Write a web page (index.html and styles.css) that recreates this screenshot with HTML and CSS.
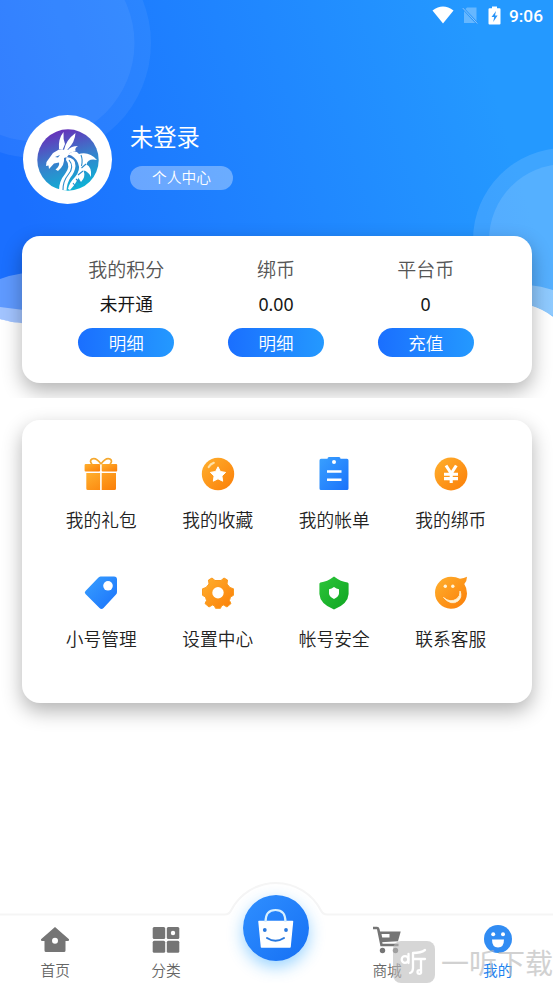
FILE: index.html
```html
<!DOCTYPE html>
<html lang="zh-CN">
<head>
<meta charset="utf-8">
<title>我的</title>
<link rel="stylesheet" href="styles.css">
</head>
<body>
<svg class="defs" width="0" height="0" aria-hidden="true">
  <defs>
    <linearGradient id="orange" x1="0" y1="0" x2="1" y2="1"><stop offset="0" stop-color="#ffb02e"/><stop offset="1" stop-color="#fb7e08"/></linearGradient>
    <linearGradient id="blue" x1="0" y1="0" x2="1" y2="1"><stop offset="0" stop-color="#39a0ff"/><stop offset="1" stop-color="#1a72fb"/></linearGradient>
    <linearGradient id="green" x1="0" y1="0" x2="1" y2="1"><stop offset="0" stop-color="#2cc53a"/><stop offset="1" stop-color="#10a522"/></linearGradient>
  </defs>
</svg>
<div class="screen">
  <header class="hero">
    <svg class="hero-bg" viewBox="0 0 553 398" aria-hidden="true">
      <defs>
        <linearGradient id="sky" gradientUnits="userSpaceOnUse" x1="30" y1="250" x2="500" y2="110"><stop offset="0" stop-color="#1a6fff"/><stop offset="1" stop-color="#2499ff"/></linearGradient>
      </defs>
      <rect width="553" height="398" fill="#fff"/>
      <path d="M0 0H553V317Q542 309 531 306L276 350L21 323Q10 322 0 319Z" fill="url(#sky)"/>
      <circle cx="36" cy="43" r="115" fill="#fff" opacity=".06"/>
      <circle cx="36" cy="43" r="98.500" fill="#fff" opacity=".06"/>
      <circle cx="565" cy="240" r="92" fill="#fff" opacity=".12"/>
      <circle cx="565" cy="240" r="76" fill="#fff" opacity=".12"/>
      <path d="M0 279Q11 275 24 273V324Q10 322 0 319Z" fill="#fff" opacity=".3"/>
      <path d="M0 307L24 310V324Q10 322 0 319Z" fill="#fff" opacity=".42"/>
      <path d="M529 285Q541 286 553 290V317Q542 309 529 306Z" fill="#fff" opacity=".34"/>
      <path d="M529 305Q543 309 553 317V340H529Z" fill="#fff"/>
    </svg>
    <div class="status">
      <svg class="wifi" viewBox="0 0 22 18"><path d="M.5 4.500Q11-3.500 21.500 4.500L11 17.500Z" fill="#fff"/></svg>
      <svg class="sim" viewBox="0 0 16 18"><path d="M5 1.500H14.500V17H2V4.500Z" fill="#fff" opacity=".3"/><path d="M.7 2L15.300 17.500" stroke="#2795fb" stroke-width="2.400"/><path d="M.7 2L15.300 17.500" stroke="#fff" opacity=".45"/></svg>
      <svg class="battery" viewBox="0 0 13 19"><path d="M4 .5H9V2.200H11.500Q12.500 2.200 12.500 3.200V17.500Q12.500 18.500 11.500 18.500H1.500Q.5 18.500 .5 17.500V3.200Q.5 2.200 1.500 2.200H4Z" fill="#fff"/><path d="M8 5L3.500 11H6.200L5.200 16L9.600 9.500H7Z" fill="#2994f7"/></svg>
      <span class="time">9:06</span>
    </div>
    <div class="profile">
      <div class="avatar">
        <svg viewBox="0 0 62 62">
          <defs><linearGradient id="dusk" x1=".3" y1="0" x2=".6" y2="1"><stop offset="0" stop-color="#6a2cb8"/><stop offset=".5" stop-color="#377fcc"/><stop offset="1" stop-color="#0cb4d5"/></linearGradient></defs>
          <circle cx="31" cy="31" r="30.700" fill="url(#dusk)"/>
          <g fill="#fff">
            <path d="M22 20Q21 10 26.500 3Q26 10 28 15L25.500 21Z"/>
            <path d="M27 21Q29 11 38.500 4Q38 13 31 20L29 23Z"/>
            <path d="M16 24L22 20.500L31 21Q34 17 41 17Q37.500 19 38.500 22L33 24L30 28L27 29Q28 36 21 42L18.500 40.500Q23 37 22 33.500L17 34.500L12 40L11.500 36.500L9 37L9.500 33Z"/>
            <path d="M31 25.500Q38 20 42 25L44 24.500Q53 23 60 31Q51 29 49.500 35.500Q55 38 54 48Q51 42 46.500 41.500Q49 48 44 53L41.500 49Q38 56 33 61L31 60Q32 54 38 48Q44 41 41 34Q38 27 31 25.500Z"/>
            <path d="M29.500 28Q39 29 38.500 37Q38 43 33.500 48.500Q30 54 29.500 61.500H22Q22 52 28 45Q34 37 29 31Z"/>
          </g>
          <path d="M32 31Q38 38 31 46Q26 52 26 61M44 26Q46 31 44.500 37M49 35L44.500 39M46 42L41 46M39 50L43 54M36 54L39 58" fill="none" stroke="#2b8dcc" stroke-width="1.100"/>
          <path d="M18 28L23 26L21 28.500Z" fill="#3277c7"/>
        </svg>
      </div>
      <div class="who">
        <h1>未登录</h1>
        <a class="center">个人中心</a>
      </div>
    </div>
    <section class="card wallet">
      <div class="purse"><span class="label">我的积分</span><span class="value">未开通</span><button>明细</button></div>
      <div class="purse"><span class="label">绑币</span><span class="value">0.00</span><button>明细</button></div>
      <div class="purse"><span class="label">平台币</span><span class="value">0</span><button>充值</button></div>
    </section>
  </header>

  <main class="card menu">
    <a class="item"><svg viewBox="0 0 36 36"><g fill="url(#orange)"><rect x="1.600" y="8" width="15.500" height="7.500" rx="1"/><rect x="18.700" y="8" width="15.500" height="7.500" rx="1"/><path d="M3.300 17H17.100V34H4.800Q3.300 34 3.300 32.500ZM18.700 17H33V32.500Q33 34 31.500 34H18.700Z"/></g><path d="M18 8Q13 1 9 3Q6 5 9 8M18 8Q23 1 27 3Q30 5 27 8" fill="none" stroke="#f5a82e" stroke-width="1.700"/></svg><span>我的礼包</span></a>
    <a class="item"><svg viewBox="0 0 36 36"><circle cx="18" cy="18" r="16.200" fill="url(#orange)"/><path d="M18 10.800L20.400 15.500L25.600 16.400L21.900 20L22.700 25.200L18 22.800L13.300 25.200L14.100 20L10.400 16.400L15.600 15.500Z" fill="#fff" stroke="#fff" stroke-linejoin="round"/><path d="M8.700 11Q10.500 8 13.800 6.800" fill="none" stroke="#ffe1a5" stroke-width="2.200" stroke-linecap="round"/></svg><span>我的收藏</span></a>
    <a class="item"><svg viewBox="0 0 36 36"><path d="M5 2.800H11.500Q11.500 1 13 1H23Q24.500 1 24.500 2.800H31Q32.500 2.800 32.500 4.500V32.500Q32.500 34 31 34H5Q3.500 34 3.500 32.500V4.500Q3.500 2.800 5 2.800Z" fill="url(#blue)"/><circle cx="18" cy="6" r="2" fill="#fff"/><path d="M11 15.500H25.500M11 23.700H25.500" stroke="#fff" stroke-width="2.400"/></svg><span>我的帐单</span></a>
    <a class="item"><svg viewBox="0 0 36 36"><circle cx="18" cy="18" r="16.400" fill="url(#orange)"/><path d="M13 9.500L18.200 17.500L23.300 9.500M18.200 17V27M11 18.300H25M11 22.600H25" fill="none" stroke="#fff" stroke-width="3.100"/></svg><span>我的绑币</span></a>
    <a class="item"><svg viewBox="0 0 36 36"><path d="M17.500 1.500H31Q34 1.500 34 4.500V17Q34 18.500 33 19.500L20.500 33Q18.500 35 16.500 33L2.500 19Q1 17.500 2.500 16L15 3Q16 1.500 17.500 1.500Z" fill="url(#blue)"/><circle cx="25" cy="10.800" r="4.800" fill="#fff"/></svg><span>小号管理</span></a>
    <a class="item"><svg viewBox="0 0 36 36"><g fill="url(#orange)"><path d="M12 3L15 5.500H21L24 3L27.500 5L27 9L30 12.500L33.500 13.800V20.300L30.500 22L29.500 25.500L31 28.500L27 32L23.500 30L21.500 31L20.500 33.300H15.500L14.500 31L12.500 30L9 32L5 28.500L6.500 25.500L5.500 22L2.500 20.300V13.800L6 12.500L9 9L8.500 5Z" stroke="#fb9a1e" stroke-linejoin="round"/></g><circle cx="18" cy="17.800" r="5.700" fill="#fff"/></svg><span>设置中心</span></a>
    <a class="item"><svg viewBox="0 0 36 36"><path d="M18 1.600Q25 7 31.500 7.500Q32.600 7.800 32.600 9V19Q32 29 18 34.500Q4 29 3.400 19V9Q3.400 7.800 4.500 7.500Q11 7 18 1.600Z" fill="url(#green)"/><path d="M18 12Q20.500 14 23 14.200V18.500Q22.800 21.700 18 24Q13.200 21.700 13 18.500V14.200Q15.500 14 18 12Z" fill="#fff"/></svg><span>帐号安全</span></a>
    <a class="item"><svg viewBox="0 0 36 36"><path d="M18 1.800Q23 1.800 27 3.800Q31 3 34 1.700Q34 6 31.300 9Q34 13 34 18.500A16 16 0 1 1 18 1.800Z" fill="url(#orange)"/><circle cx="12.300" cy="11.300" r="1.700" fill="#fff3d7"/><circle cx="19.800" cy="11.300" r="1.700" fill="#fff3d7"/><path d="M10.500 22.500Q17 28 23.500 24Q27.500 21 27 16Q29.500 22 25 26Q18 31 10.500 22.500Z" fill="#fff3d7" stroke="#fff3d7" stroke-width=".8"/></svg><span>联系客服</span></a>
  </main>

  <nav class="tabs">
    <svg class="tabs-edge" viewBox="0 0 553 104" aria-hidden="true"><path d="M-3 35.500H225Q229 35.500 231 31.500A50.500 50.500 0 0 1 321 31.500Q323 35.500 327 35.500H556V110H-3Z" fill="#fff" stroke="#f5f5f5" stroke-width="2"/></svg>
    <a class="tab"><svg viewBox="0 0 30 30"><path d="M15 2L29 14.200Q29.500 16 28 16H25.500V25.500Q25.500 27 24 27H6Q4.500 27 4.500 25.500V16H2Q.5 16 1 14.200Z" fill="#757575"/><circle cx="15" cy="15.800" r="3" fill="#fff"/></svg><span>首页</span></a>
    <a class="tab"><svg viewBox="0 0 30 30"><g fill="#757575"><rect x="1.700" y="2" width="12.500" height="12" rx="1.500"/><rect x="15.800" y="2" width="12.500" height="12" rx="1.500"/><rect x="1.700" y="15.800" width="12.500" height="12" rx="1.500"/><rect x="15.800" y="15.800" width="12.500" height="12" rx="1.500"/></g><circle cx="22" cy="8" r="2.200" fill="#fff"/></svg><span>分类</span></a>
    <a class="tab bag"><svg viewBox="0 0 66 66"><path d="M16 26.500H49.500L47 52H18.500Z" fill="#fff" stroke="#fff" stroke-width="1.500" stroke-linejoin="round"/><path d="M22.500 27Q22.500 15 32.500 15Q42.500 15 42.500 27" fill="none" stroke="#d7f0ff" stroke-width="2.200"/><path d="M24 43Q32.500 48.500 41 43" fill="none" stroke="#2979df" stroke-width="2" stroke-linecap="round"/><circle cx="21.800" cy="35" r="1.900" fill="#2979df"/><circle cx="43" cy="35" r="1.900" fill="#2979df"/></svg></a>
    <a class="tab"><svg viewBox="0 0 30 30"><path d="M1 3H5Q6 3 6.300 4.200L9.500 20H26.500" fill="none" stroke="#757575" stroke-width="2.600"/><path d="M6 6.500H28.700L26 16.200L9 17.300Z" fill="#757575"/><path d="M9.500 9H17.500V12.500H10.200Z" fill="#fff"/><circle cx="10.500" cy="25.500" r="2.700" fill="#757575"/><circle cx="23.500" cy="25.500" r="2.700" fill="#757575"/></svg><span>商城</span></a>
    <a class="tab active"><svg viewBox="0 0 30 30"><circle cx="15" cy="14" r="14" fill="#318cf3"/><circle cx="10.200" cy="9.300" r="2" fill="#fff"/><circle cx="20" cy="9.300" r="2" fill="#fff"/><path d="M9 14.500H21Q21 22.500 15 22.500Q9 22.500 9 14.500Z" fill="#fff"/></svg><span>我的</span></a>
  </nav>

  <div class="mark">
    <svg viewBox="0 0 42 42"><rect width="42" height="42" rx="8" fill="#bcbcbc"/><g fill="none" stroke="#fff" stroke-width="2.300" stroke-linecap="round" stroke-linejoin="round"><circle cx="12" cy="18.500" r="3.300"/><path d="M15.500 13V22M32 9Q28 12 20 12V27Q20 31 17 32M20 18H32M28 18V30"/><circle cx="26.300" cy="31" r="1.800"/></g></svg>
    <span>一听下载</span>
  </div>
</div>
</body>
</html>
```
FILE: styles.css
```css
* { box-sizing: border-box; }
body {
  margin: 0;
  background: #fff;
  font-family: "Noto Sans CJK SC", "Noto Sans", sans-serif;
  font-weight: 350;
}
.defs { position: absolute; }
.screen {
  position: relative;
  display: flex;
  flex-direction: column;
  width: 553px;
  height: 983px;
  overflow: hidden;
}
.hero {
  position: relative;
  height: 398px;
  overflow: hidden;
  flex: none;
}
.hero-bg { position: absolute; inset: 0; width: 553px; height: 398px; }
.status {
  position: relative;
  display: flex;
  align-items: center;
  justify-content: flex-end;
  height: 30px;
  padding-right: 10px;
}
.wifi { width: 22px; height: 18px; margin-right: 8px; }
.sim { width: 16px; height: 18px; margin-right: 10px; }
.battery { width: 13px; height: 19px; margin-right: 8px; }
.time { font: 500 17.3px/30px Roboto, sans-serif; color: #fff; padding-top: 1px; }

.profile {
  position: relative;
  display: flex;
  gap: 18px;
  padding: 85px 0 0 23px;
}
.avatar {
  display: grid;
  place-items: center;
  width: 89px;
  height: 89px;
  border-radius: 50%;
  background: #fff;
}
.avatar svg { width: 62px; height: 62px; }
.who { display: flex; flex-direction: column; align-items: flex-start; }
.who h1 {
  margin: 4px 0 0;
  font-size: 23.3px;
  line-height: 34px;
  font-weight: 400;
  color: #fff;
}
.center {
  margin-top: 13px;
  width: 103px;
  height: 24px;
  border-radius: 12px;
  background: rgba(255, 255, 255, .34);
  color: #fff;
  font-size: 14.7px;
  line-height: 22px;
  text-align: center;
}

.card {
  width: 510px;
  border-radius: 18px;
  background: #fff;
  box-shadow: 0 8px 20px rgba(0, 0, 0, .3);
}
.wallet {
  position: relative;
  display: grid;
  grid-template-columns: repeat(3, 1fr);
  height: 147px;
  margin: 32px 0 0 21.5px;
  padding: 19px 31px 0 30px;
}
.purse { display: flex; flex-direction: column; align-items: center; }
.label { font-size: 19px; line-height: 28px; color: #555; }
.value { margin-top: 8px; font: 400 17.7px/26px "Noto Sans", "Noto Sans CJK SC", sans-serif; color: #161616; }
.purse button {
  width: 96px;
  height: 29px;
  margin-top: 10.5px;
  padding: 0;
  border: 0;
  border-radius: 15px;
  background: linear-gradient(90deg, #1a6fff, #2499ff);
  color: #fff;
  font: inherit;
  font-size: 17.5px;
  line-height: 27px;
}

.menu {
  display: grid;
  grid-template-columns: repeat(4, 1fr);
  grid-auto-rows: 119px;
  align-content: start;
  flex: none;
  height: 283px;
  margin: 22px 0 0 21.5px;
  padding: 35.5px 22.5px 0 21.5px;
}
.item { display: flex; flex-direction: column; align-items: center; font-size: 17.7px; line-height: 26px; color: #222; }
.item svg { width: 36px; height: 36px; margin-bottom: 14px; }

.tabs {
  position: relative;
  display: grid;
  grid-template-columns: repeat(5, 1fr);
  height: 69px;
  margin-top: auto;
  flex: none;
}
.tabs-edge { position: absolute; left: 0; bottom: 0; width: 553px; height: 104px; }
.tab {
  position: relative;
  display: flex;
  flex-direction: column;
  align-items: center;
  padding-top: 10.5px;
  font-size: 14.7px;
  line-height: 22px;
  color: #666;
}
.tab svg { width: 30px; height: 30px; margin-bottom: 4px; }
.tab.active { color: #1d83ef; }
.bag { padding: 0; }
.bag svg {
  flex: none;
  width: 66px;
  height: 66px;
  margin-top: -19px;
  border-radius: 50%;
  background: linear-gradient(135deg, #2f8fff, #1670f4);
  box-shadow: 0 6px 16px rgba(30, 160, 255, .45);
}
.mark {
  position: absolute;
  left: 393px;
  bottom: 0;
  display: flex;
  align-items: center;
  gap: 6px;
  opacity: .6;
  color: #b4b4b4;
  font-size: 28px;
  line-height: 42px;
  font-weight: 400;
  white-space: nowrap;
}
.mark svg { width: 42px; height: 42px; }
.tab.active span { font-weight: 400; }
```
